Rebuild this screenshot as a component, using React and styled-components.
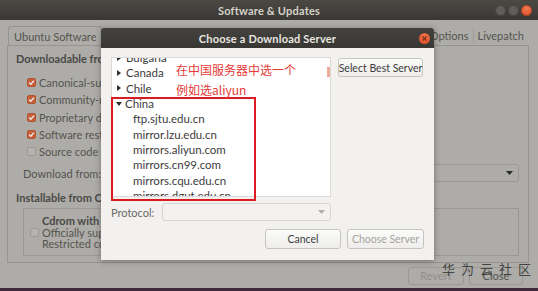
import React from 'react';
import styled, { createGlobalStyle } from 'styled-components';

const Global = createGlobalStyle`
  html, body { margin: 0; padding: 0; overflow: hidden; }
  body { font-family: Lato, "Noto Sans", sans-serif; }
`;

const Screen = styled.div`
  position: relative;
  width: 538px;
  height: 291px;
  overflow: hidden;
  font-family: Lato, "Noto Sans", "Noto Sans CJK SC", sans-serif;
  font-size: 11px;
`;

// ---- parent window (dimmed behind the modal) ----

const Window = styled.div`
  display: flex;
  flex-direction: column;
  height: 100%;
  box-sizing: border-box;
  background: #adaca8;
  border-bottom: 3px solid #3e2a3b;
  color: #55544f;
`;

const TitleBar = styled.div`
  height: 20px;
  flex: none;
  display: grid;
  grid-template-columns: 1fr auto 1fr;
  align-items: center;
  background: linear-gradient(#4a4944, #393834);
  color: #d6d2c9;
  font-size: 11px;
  font-weight: 700;
  letter-spacing: 0.2px;
`;

const WinButtons = styled.div`
  grid-column: 3;
  display: flex;
  justify-content: flex-end;
  gap: 2px;
  padding-right: 6px;
`;

const WinButton = styled.span`
  width: 11px;
  height: 11px;
  border-radius: 50%;
  background: ${p => (p.$close ? 'radial-gradient(circle at 50% 35%, #f07a50, #d9481f)' : '#5f5e5a')};
  box-shadow: inset 0 0 0 1px rgba(0, 0, 0, 0.25);
`;

const Notebook = styled.div`
  flex: 1;
  display: flex;
  flex-direction: column;
  padding: 5px 9px 0 7px;
`;

const Tabs = styled.div`
  height: 20px;
  display: flex;
  align-items: stretch;
`;

const TabGroup = styled.div`
  display: flex;
  align-items: stretch;
  ${p => (p.$right ? 'flex: none; margin-left: auto;' : 'flex: 1; min-width: 0; overflow: hidden; padding-top: 1px;')}
`;

const Tab = styled.div`
  display: flex;
  align-items: center;
  padding: 0 4px;
  white-space: nowrap;
  color: #55544f;
  position: relative;
  ${p =>
    p.$active
      ? `
    border: 1px solid #95948f;
    border-bottom: none;
    border-radius: 3px 3px 0 0;
    margin-left: 1px;
    padding: 0 5px;
    background: #adaca8;
  `
      : `
    &:not(:last-child)::after {
      content: '';
      position: absolute;
      right: 0;
      top: 3px;
      bottom: 3px;
      width: 1px;
      background: #9c9b97;
    }
    padding-right: 5px;
  `}
`;

const Frame = styled.div`
  height: 218px;
  box-sizing: border-box;
  border: 1px solid #95948f;
  padding: 5px 9px 0 8px;
  display: flex;
  flex-direction: column;
`;

const Heading = styled.div`
  height: 15px;
  line-height: 15px;
  font-weight: 700;
  color: #4a4945;
`;

const CheckList = styled.div`
  margin-top: 8px;
  padding-left: 11px;
`;

const CheckRow = styled.div`
  height: 17.3px;
  display: flex;
  align-items: center;
  gap: 3px;
  white-space: nowrap;
`;

const Box = styled.span`
  width: 9px;
  height: 9px;
  flex: none;
  border-radius: 2px;
  display: flex;
  align-items: center;
  justify-content: center;
  background: ${p => (p.$on ? '#c5603a' : '#b5b4b0')};
  border: 1px solid ${p => (p.$on ? '#b0532f' : '#9a9994')};
  box-sizing: border-box;
`;

const Check = ({ on }) => (
  <Box $on={on}>
    {on && (
      <svg width="7" height="7" viewBox="0 0 7 7">
        <path d="M1 3.6 L2.8 5.3 L6 1.6" fill="none" stroke="#eee" strokeWidth="1.3" />
      </svg>
    )}
  </Box>
);

const SourceRow = styled.div`
  height: 20px;
  margin-top: 3px;
  display: flex;
  align-items: center;
  padding-left: 7px;
`;

const SourceCombo = styled.div`
  margin-left: auto;
  width: 268px;
  height: 18px;
  box-sizing: border-box;
  border: 1px solid #999893;
  border-radius: 3px;
  display: flex;
  align-items: center;
  justify-content: flex-end;
  padding-right: 5px;
`;

const Heading2 = styled(Heading)`
  margin-top: 7px;
`;

const CdBox = styled.div`
  margin: 3px 0 0 7px;
  height: 48px;
  box-sizing: border-box;
  border: 1px solid #999893;
  display: flex;
  align-items: center;
  gap: 3px;
  padding-left: 6px;
`;

const CdText = styled.div`
  display: flex;
  flex-direction: column;
  line-height: 11.5px;
  white-space: nowrap;
  b {
    color: #4a4945;
  }
`;

const Footer = styled.div`
  height: 25px;
  display: flex;
  justify-content: flex-end;
  align-items: center;
  gap: 5px;
  padding-right: 6px;
`;

const GhostButton = styled.div`
  width: ${p => p.$w}px;
  height: 18px;
  box-sizing: border-box;
  border: 1px solid #9a9994;
  border-radius: 3px;
  display: flex;
  align-items: center;
  justify-content: center;
  color: ${p => (p.$dim ? '#908f8b' : '#55544f')};
`;

const Arrow = ({ color }) => (
  <svg width="7" height="4" viewBox="0 0 7 4">
    <path d="M0 0 H7 L3.5 4 Z" fill={color} />
  </svg>
);

// ---- modal dialog ----

const Dialog = styled.div`
  position: absolute;
  left: 101px;
  top: 28px;
  width: 333px;
  display: flex;
  flex-direction: column;
  box-shadow: 0 1px 6px rgba(0, 0, 0, 0.35);
  z-index: 2;
`;

const DialogTitle = styled.div`
  height: 20px;
  display: grid;
  grid-template-columns: 1fr auto 1fr;
  align-items: center;
  background: linear-gradient(#43423e, #383733);
  color: #e9e6e0;
  font-size: 11px;
  font-weight: 700;
  letter-spacing: 0.2px;
  border-radius: 3px 3px 0 0;
`;

const DialogClose = styled.span`
  grid-column: 3;
  justify-self: end;
  margin-right: 4px;
  width: 11px;
  height: 11px;
  border-radius: 50%;
  background: radial-gradient(circle at 50% 35%, #f07a50, #d9481f);
  display: flex;
  align-items: center;
  justify-content: center;
`;

const DialogBody = styled.div`
  height: 212px;
  box-sizing: border-box;
  background: #f2f1f0;
  padding: 9px 11px 11px 10px;
  display: flex;
  flex-direction: column;
  color: #3c3c3c;
`;

const Top = styled.div`
  display: flex;
  gap: 7px;
  align-items: flex-start;
`;

const Tree = styled.div`
  position: relative;
  width: 220px;
  height: 140px;
  box-sizing: border-box;
  background: #ffffff;
  border: 1px solid #dcdad6;
  overflow: hidden;
`;

const TreeList = styled.div`
  margin-top: -8px;
`;

const TreeRow = styled.div`
  height: 15.3px;
  display: flex;
  align-items: center;
  gap: 3px;
  padding-left: ${p => (p.$child ? '21px' : '4px')};
  white-space: nowrap;
  font-size: 11.5px;
  color: #3c3c3c;
`;

const Expander = styled.span`
  width: 0;
  height: 0;
  ${p =>
    p.$open
      ? `border-left: 3.5px solid transparent; border-right: 3.5px solid transparent; border-top: 4px solid #2c2c2c;`
      : `border-top: 3.5px solid transparent; border-bottom: 3.5px solid transparent; border-left: 4px solid #2c2c2c; margin-left: 1px; margin-right: 2px;`}
`;

const ScrollMark = styled.span`
  position: absolute;
  right: 0;
  top: 9px;
  width: 3px;
  height: 10px;
  background: #f2aa98;
`;

const Button = styled.div`
  width: ${p => p.$w}px;
  height: ${p => p.$h || 20}px;
  box-sizing: border-box;
  border: 1px solid #c6c4bf;
  border-radius: 3px;
  background: linear-gradient(#fbfbfa, #eeedeb);
  display: flex;
  align-items: center;
  justify-content: center;
  white-space: nowrap;
  font-size: 10.5px;
  color: ${p => (p.$disabled ? '#a5a3a0' : '#3c3c3c')};
  margin-top: ${p => p.$mt || 0}px;
`;

const ProtocolRow = styled.div`
  margin-top: 6px;
  height: 18px;
  display: flex;
  align-items: center;
`;

const ProtocolLabel = styled.span`
  width: 51px;
  color: #6a6965;
`;

const DisabledCombo = styled.div`
  width: 169px;
  height: 18px;
  box-sizing: border-box;
  border: 1px solid #d6d4d0;
  border-radius: 3px;
  background: #f3f2f1;
  display: flex;
  align-items: center;
  justify-content: flex-end;
  padding-right: 5px;
`;

const ButtonRow = styled.div`
  margin-top: 8px;
  display: flex;
  justify-content: flex-end;
  gap: 6px;
  margin-right: -1px;
`;

// ---- overlays drawn on the screenshot ----

const Mark = styled.div`
  position: absolute;
  left: 111px;
  top: 97px;
  width: 145px;
  height: 104px;
  box-sizing: border-box;
  border: 2px solid #dc1a22;
  z-index: 3;
`;

const Note = styled.div`
  position: absolute;
  left: 176px;
  top: ${p => p.$top}px;
  color: #e53a36;
  font-family: "Noto Sans CJK SC", "Noto Sans", sans-serif;
  font-size: 12px;
  line-height: 16px;
  white-space: nowrap;
  z-index: 3;
`;

const Watermark = styled.div`
  position: absolute;
  left: 442px;
  top: 259px;
  color: rgba(40, 40, 40, 0.8);
  font-family: "Noto Sans CJK SC", sans-serif;
  font-size: 13px;
  letter-spacing: 6px;
  white-space: nowrap;
  z-index: 3;
`;

const countries = ['Bulgaria', 'Canada', 'Chile'];
const mirrors = [
  'ftp.sjtu.edu.cn',
  'mirror.lzu.edu.cn',
  'mirrors.aliyun.com',
  'mirrors.cn99.com',
  'mirrors.cqu.edu.cn',
  'mirrors.dgut.edu.cn',
  'mirrors.huaweicloud.com'
];

const sources = [
  ['Canonical-supported free and open-source software (main)', true],
  ['Community-maintained free and open-source software (universe)', true],
  ['Proprietary drivers for devices (restricted)', true],
  ['Software restricted by copyright or legal issues (multiverse)', true],
  ['Source code', false]
];

export default function App() {
  return (
    <Screen>
      <Global />
      <Window>
        <TitleBar>
          <span style={{ gridColumn: 2 }}>Software &amp; Updates</span>
          <WinButtons>
            <WinButton />
            <WinButton />
            <WinButton $close />
          </WinButtons>
        </TitleBar>
        <Notebook>
          <Tabs>
            <TabGroup>
              <Tab $active>Ubuntu Software</Tab>
              <Tab>Other Software</Tab>
              <Tab>Updates</Tab>
              <Tab>Authentication</Tab>
              <Tab>Additional Drivers</Tab>
            </TabGroup>
            <TabGroup $right>
              <Tab>Developer Options</Tab>
              <Tab>Livepatch</Tab>
            </TabGroup>
          </Tabs>
          <Frame>
            <Heading>Downloadable from the Internet</Heading>
            <CheckList>
              {sources.map(([label, on]) => (
                <CheckRow key={label}>
                  <Check on={on} />
                  <span>{label}</span>
                </CheckRow>
              ))}
            </CheckList>
            <SourceRow>
              <span>Download from:</span>
              <SourceCombo>
                <Arrow color="#2a2a2a" />
              </SourceCombo>
            </SourceRow>
            <Heading2>Installable from CD-ROM/DVD</Heading2>
            <CdBox>
              <Check on={false} />
              <CdText>
                <b>Cdrom with Ubuntu 18.04 'Bionic Beaver'</b>
                <span>Officially supported</span>
                <span>Restricted copyright</span>
              </CdText>
            </CdBox>
          </Frame>
          <Footer>
            <GhostButton $w={56} $dim>Revert</GhostButton>
            <GhostButton $w={54}>Close</GhostButton>
          </Footer>
        </Notebook>
      </Window>

      <Dialog>
        <DialogTitle>
          <span style={{ gridColumn: 2 }}>Choose a Download Server</span>
          <DialogClose>
            <svg width="5" height="5" viewBox="0 0 5 5">
              <path d="M0.5 0.5 L4.5 4.5 M4.5 0.5 L0.5 4.5" stroke="#7a2a10" strokeWidth="1.1" />
            </svg>
          </DialogClose>
        </DialogTitle>
        <DialogBody>
          <Top>
            <Tree>
              <TreeList>
                {countries.map(c => (
                  <TreeRow key={c}>
                    <Expander />
                    <span>{c}</span>
                  </TreeRow>
                ))}
                <TreeRow>
                  <Expander $open />
                  <span>China</span>
                </TreeRow>
                {mirrors.map(m => (
                  <TreeRow key={m} $child>
                    {m}
                  </TreeRow>
                ))}
              </TreeList>
              <ScrollMark />
            </Tree>
            <Button $w={85} $h={19} $mt={1}>Select Best Server</Button>
          </Top>
          <ProtocolRow>
            <ProtocolLabel>Protocol:</ProtocolLabel>
            <DisabledCombo>
              <Arrow color="#b0aeaa" />
            </DisabledCombo>
          </ProtocolRow>
          <ButtonRow>
            <Button $w={76}>Cancel</Button>
            <Button $w={77} $disabled>Choose Server</Button>
          </ButtonRow>
        </DialogBody>
      </Dialog>

      <Mark />
      <Note $top={62}>在中国服务器中选一个</Note>
      <Note $top={82}>例如选aliyun</Note>
      <Watermark>华为云社区</Watermark>
    </Screen>
  );
}
